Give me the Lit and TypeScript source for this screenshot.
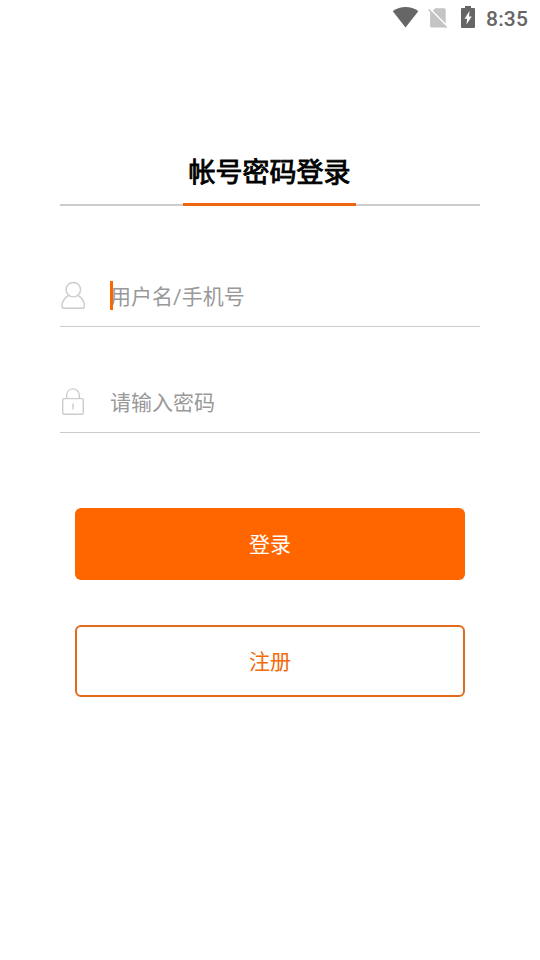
import { LitElement, html, css } from "lit";
import { customElement } from "lit/decorators.js";

@customElement("status-bar")
class StatusBar extends LitElement {
  static styles = css`
    :host {
      display: flex;
      justify-content: flex-end;
      height: 36px;
      padding-right: 12px;
      box-sizing: border-box;
    }
    svg { display: block; flex: none; }
    .wifi { margin: 7px 9px 0 0; }
    .sim { margin: 7px 13px 0 0; }
    .battery { margin: 6px 11px 0 0; }
    .time {
      width: 42px;
      font: 500 21px/36px Roboto, "Noto Sans", sans-serif;
      letter-spacing: 0.2px;
      color: #666;
      padding-top: 1px;
      white-space: nowrap;
    }
  `;
  render() {
    return html`
      <svg class="wifi" width="26" height="21" viewBox="0 0 26 21">
        <path d="M-0.2 4.2C7-1.4 18-1.4 25.3 4.2L12.5 20.6Z" fill="#666"/>
      </svg>
      <svg class="sim" width="20" height="22" viewBox="0 0 20 22">
        <path d="M7.2 1.3H16.2Q17.7 1.3 17.7 2.8V16.6L4.9 3.8ZM2.1 3.4L18 19.5Q17.4 20.4 16.2 20.4H3.6Q2.1 20.4 2.1 18.9Z" fill="#c4c4c4"/>
        <path d="M0.6 2.5L18.6 20.6" stroke="#c4c4c4" stroke-width="1.7"/>
      </svg>
      <svg class="battery" width="14" height="22" viewBox="0 0 14 22">
        <path d="M4 0H10V2H13Q14 2 14 3V21Q14 22 13 22H1Q0 22 0 21V3Q0 2 1 2H4Z" fill="#666"/>
        <path d="M8.6 5L3.5 12.8H6.1L5.5 18.4L10.7 10.5H8Z" fill="#fff"/>
      </svg>
      <span class="time">8:35</span>
    `;
  }
}

@customElement("app-root")
class AppRoot extends LitElement {
  static styles = css`
    :host {
      display: block;
      height: 960px;
      overflow: hidden;
      background: #fff;
      font-family: Roboto, "Noto Sans CJK SC", sans-serif;
    }
    .page { padding: 107px 60px 0; }
    .tabs {
      display: flex;
      justify-content: center;
      box-sizing: border-box;
      height: 63px;
      background: linear-gradient(#ccc, #ccc) bottom / 100% 2px no-repeat;
    }
    .tab {
      box-sizing: border-box;
      width: 173px;
      height: 63px;
      margin-right: 1px;
      border-bottom: 3px solid #ee6710;
      text-align: center;
      font-size: 27px;
      line-height: 61px;
      color: #000;
      -webkit-text-stroke: 0.9px #000;
      white-space: nowrap;
    }
    .field {
      display: flex;
      align-items: center;
      box-sizing: border-box;
      height: 61px;
      border-bottom: 1px solid #ccc;
      font-size: 21px;
      color: #999;
    }
    .first { margin-top: 60px; }
    .second { margin-top: 45px; }
    .icon { width: 26px; height: 30px; flex: none; margin-right: 24px; }
    .hint { position: relative; line-height: 30px; padding-top: 2px; }
    .caret {
      position: absolute;
      left: 0;
      top: 1px;
      width: 3px;
      height: 29px;
      background: #fb6800;
    }
    .button {
      display: flex;
      align-items: center;
      justify-content: center;
      box-sizing: border-box;
      margin: 0 15px;
      padding-bottom: 2px;
      height: 72px;
      border-radius: 6px;
      font-size: 21px;
    }
    .primary { margin-top: 75px; background: #ff6600; color: #fff; }
    .outline { margin-top: 45px; border: 2px solid #e06a1e; color: #f26a0a; }
  `;
  render() {
    return html`
      <status-bar></status-bar>
      <main class="page">
        <div class="tabs"><div class="tab">帐号密码登录</div></div>
        <div class="field first">
          <svg class="icon" viewBox="0 0 26 30" fill="none" stroke="#ccc" stroke-width="1.4">
            <circle cx="13.3" cy="8.7" r="7.2"/>
            <path d="M8.6 14.4C4.6 17 2 20.8 2 24.8Q2 27.3 4.2 27.3H22.2Q24.4 27.3 24.4 24.8C24.4 20.8 22 17 18 14.4"/>
          </svg>
          <span class="hint"><span class="caret"></span>用户名/手机号</span>
        </div>
        <div class="field second">
          <svg class="icon" viewBox="0 0 26 30" fill="none" stroke="#ccc" stroke-width="1.4">
            <rect x="2.7" y="11.6" width="20.6" height="15.6" rx="1.3"/>
            <path d="M6.7 11.6V8.2C6.7-0.2 19.3-0.2 19.3 8.2V11.6M13 16.5V22.5"/>
          </svg>
          <span class="hint">请输入密码</span>
        </div>
        <div class="button primary">登录</div>
        <div class="button outline">注册</div>
      </main>
    `;
  }
}
